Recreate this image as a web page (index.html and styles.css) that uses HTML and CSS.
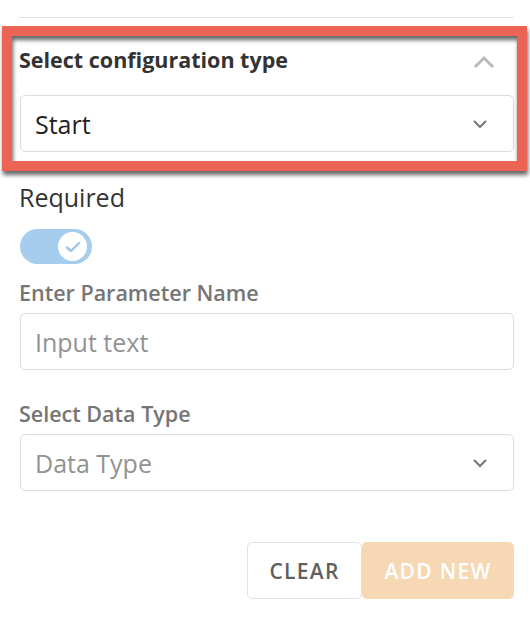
FILE: index.html
```html
<!DOCTYPE html>
<html>
<head>
<meta charset="utf-8">
<link rel="stylesheet" href="styles.css">
</head>
<body>
<div class="panel">
  <div class="divider"></div>
  <section class="config">
    <div class="config-head">
      <span class="config-title">Select configuration type</span>
      <svg class="chev-up" width="22" height="14" viewBox="0 0 22 14"><path d="M2 12 L11 3 L20 12" fill="none" stroke="#b9b9b9" stroke-width="3"/></svg>
    </div>
    <div class="field select">
      <span class="value">Start</span>
      <svg class="chev-down" width="16" height="10" viewBox="0 0 16 10"><path d="M2 2 L8 8 L14 2" fill="none" stroke="#7a7a7a" stroke-width="2.2"/></svg>
    </div>
    <div class="annot"></div>
  </section>

  <div class="req-label">Required</div>
  <div class="toggle">
    <div class="knob">
      <svg width="16" height="12" viewBox="0 0 16 12"><path d="M2 6.5 L6 10 L14 2" fill="none" stroke="#9cc6ea" stroke-width="2.4" stroke-linecap="round" stroke-linejoin="round"/></svg>
    </div>
  </div>

  <div class="label">Enter Parameter Name</div>
  <div class="field">
    <span class="placeholder">Input text</span>
  </div>

  <div class="label label-2">Select Data Type</div>
  <div class="field select">
    <span class="placeholder">Data Type</span>
    <svg class="chev-down" width="16" height="10" viewBox="0 0 16 10"><path d="M2 2 L8 8 L14 2" fill="none" stroke="#7a7a7a" stroke-width="2.2"/></svg>
  </div>

  <div class="actions">
    <button class="btn btn-clear">CLEAR</button>
    <button class="btn btn-add">ADD NEW</button>
  </div>
</div>
</body>
</html>
```
FILE: styles.css
```css
html, body {
  margin: 0;
  padding: 0;
  background: #ffffff;
}
body {
  font-family: "Open Sans", "Liberation Sans", sans-serif;
  color: #333333;
  width: 530px;
  height: 622px;
  overflow: hidden;
}
.panel {
  padding: 17px 16px 0 19px;
  display: flex;
  flex-direction: column;
}
.divider {
  height: 1px;
  background: #e3e3e3;
}
.config {
  position: relative;
  display: flex;
  flex-direction: column;
}
.config-head {
  display: flex;
  justify-content: space-between;
  align-items: center;
  height: 28px;
  margin-top: 28px;
}
.config-title {
  font-size: 21.5px;
  font-weight: 700;
  color: #333;
  line-height: 28px;
}
.config-head + .field {
  margin-top: 21px;
}
.chev-up {
  margin-right: 19px;
  margin-top: 4px;
}
.field {
  height: 55px;
  border: 1px solid #dcdcdc;
  border-radius: 5px;
  margin-left: 1px;
  display: flex;
  align-items: center;
  justify-content: space-between;
  padding: 0 25px 0 14px;
  box-sizing: content-box;
}
.value {
  font-size: 25px;
  color: #222;
}
.placeholder {
  font-size: 25px;
  color: #929292;
}
.annot {
  position: absolute;
  left: -17px;
  top: 8px;
  width: 505px;
  height: 125px;
  border: 10px solid #ec6454;
  filter: drop-shadow(1px 4px 2px rgba(0, 0, 0, 0.6));
  pointer-events: none;
}
.req-label {
  font-size: 25px;
  color: #333;
  line-height: 30px;
  margin-top: 30px;
}
.toggle {
  width: 72px;
  height: 35px;
  border-radius: 18px;
  background: #a7cdee;
  margin-top: 17px;
  margin-left: 1px;
  display: flex;
  align-items: center;
  justify-content: flex-end;
  padding-right: 5px;
  box-sizing: border-box;
}
.knob {
  width: 29px;
  height: 29px;
  border-radius: 50%;
  background: #fff;
  display: flex;
  align-items: center;
  justify-content: center;
}
.label {
  font-size: 21.5px;
  font-weight: 600;
  color: #757575;
  line-height: 28px;
  margin-top: 15px;
  margin-bottom: 6px;
}
.label-2 {
  margin-top: 30px;
}
.actions {
  display: flex;
  justify-content: flex-end;
  margin-top: 51px;
}
.btn {
  font-family: "Open Sans", "Liberation Sans", sans-serif;
  font-size: 21px;
  font-weight: 600;
  letter-spacing: 1.3px;
  height: 57px;
  border-radius: 5px;
  padding: 0;
  cursor: pointer;
}
.btn-clear {
  width: 115px;
  background: #fff;
  color: #5f5f5f;
  border: 1px solid #e2e2e2;
}
.btn-add {
  width: 152px;
  background: #f7d8b5;
  color: #ffffff;
  border: none;
}
```
